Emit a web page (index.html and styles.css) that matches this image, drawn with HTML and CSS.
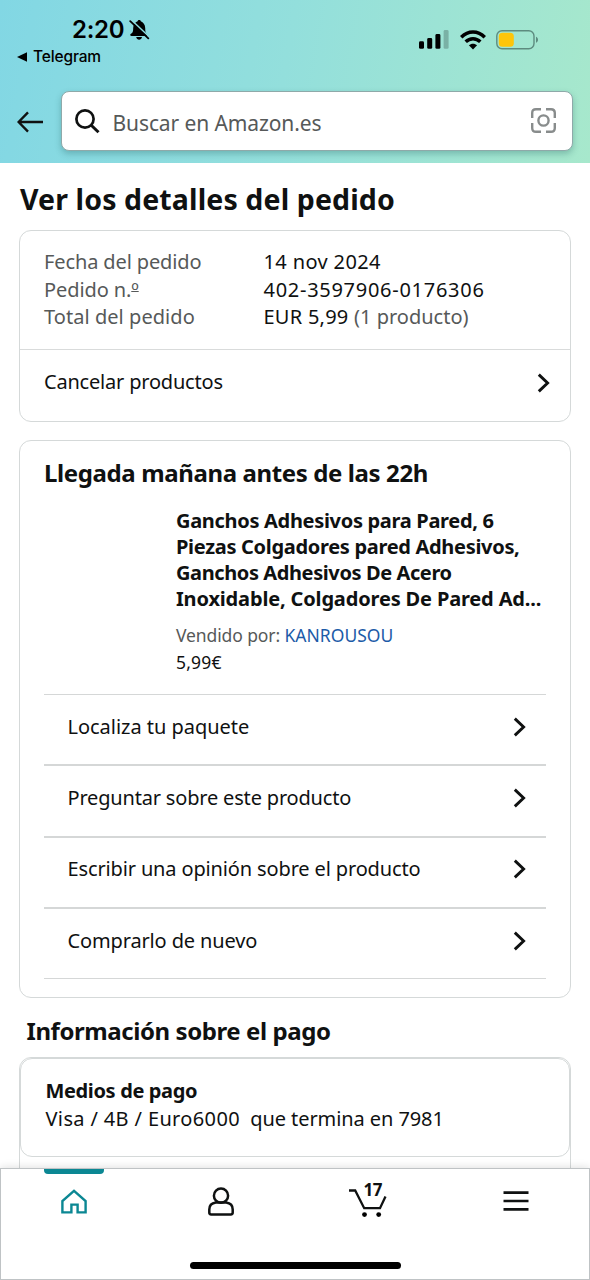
FILE: index.html
```html
<!DOCTYPE html>
<html lang="es">
<head>
<meta charset="utf-8">
<meta name="viewport" content="width=device-width, initial-scale=1">
<title>Ver los detalles del pedido</title>
<link rel="stylesheet" href="styles.css">
</head>
<body>
<svg width="0" height="0" class="defs"><symbol id="chev" viewBox="0 0 14 20"><path d="M1.8 1.6 L10.6 10 L1.8 18.4" fill="none" stroke="#0f1111" stroke-width="2.9"/></symbol></svg>
<header class="header">
  <div class="status">
    <div class="status-left">
      <div class="clock"><span>2:20</span>
        <svg width="21" height="22" viewBox="0 0 21 22"><path d="M2.6 17 H17.4 C18.4 17 18.5 15.9 17.7 15.1 C16.4 13.8 16.3 12.4 16.2 9 C16.1 5.5 14.2 3.2 11.8 2.3 C11.6 .5 8.8 .5 8.6 2.3 C6 3.2 4.3 5.5 4.2 9 C4.1 12.4 4 13.8 1.6 15.1 C.8 16 1.2 17 2.6 17 Z M7.2 18 H13 C12.4 21.6 7.8 21.6 7.2 18 Z" fill="#000"/><path d="M2.4 1 L20.4 18" stroke="#8bdbdf" stroke-width="1.7"/><path d="M1.2 2.2 L19.3 19.4" stroke="#000" stroke-width="1.8" stroke-linecap="round"/></svg>
      </div>
      <div class="back-app"><svg width="10" height="10" viewBox="0 0 10 10"><path d="M0 5 L10 .3 V9.7 Z"/></svg><span>Telegram</span></div>
    </div>
    <div class="status-right">
      <svg width="30" height="19" viewBox="0 0 30 19"><rect x="0" y="11.2" width="5" height="7.6" rx="1.4"/><rect x="8.2" y="8" width="5" height="10.8" rx="1.4"/><rect x="16.4" y="4" width="5" height="14.8" rx="1.4"/><rect x="24.6" y="0" width="5" height="18.8" rx="1.4" opacity=".22"/></svg>
      <svg class="wifi" width="26" height="20" viewBox="0 0 26 20"><g fill="none" stroke="#000" stroke-width="3.5"><path d="M1.2 7.2 C8 .2 18 .2 24.8 7.2"/><path d="M5.7 11.8 C10 7.6 16 7.6 20.3 11.8"/></g><path d="M13 19.5 L8.9 15.3 C11.2 13.2 14.8 13.2 17.1 15.3 Z"/></svg>
      <svg class="battery" width="43" height="20" viewBox="0 0 43 20"><rect x=".8" y=".8" width="37.2" height="18" rx="5.2" fill="none" stroke="#5d8b7f" stroke-width="1.4"/><rect x="2.8" y="2.8" width="15" height="14" rx="3.6" fill="#fdc50a"/><path d="M40 6.8 C42.7 8 42.7 11.6 40 12.8 Z" fill="#5d8b7f"/></svg>
    </div>
  </div>
  <div class="search-row">
    <svg class="back" width="27" height="22" viewBox="0 0 27 22"><path d="M11 1.4 L1.6 11 L11 20.6 M1.6 11 H26" fill="none" stroke="#0f1111" stroke-width="2.4"/></svg>
    <div class="search">
      <svg width="25" height="25" viewBox="0 0 25 25"><circle cx="10" cy="10" r="8.6" fill="none" stroke="#0f1111" stroke-width="2.7"/><path d="M16 16 L23.5 23.3" stroke="#0f1111" stroke-width="3"/></svg>
      <span class="placeholder">Buscar en Amazon.es</span>
      <svg class="lens" width="25" height="25" viewBox="0 0 25 25"><g fill="none" stroke="#888c8c" stroke-width="2.4"><circle cx="12.5" cy="12.5" r="5.1"/><path d="M1.2 10 V5 Q1.2 1.2 5 1.2 H10 M15 1.2 H20 Q23.8 1.2 23.8 5 V10 M23.8 15 V20 Q23.8 23.8 20 23.8 H15 M10 23.8 H5 Q1.2 23.8 1.2 20 V15"/></g></svg>
    </div>
  </div>
</header>
<main class="content">
  <h1 class="title">Ver los detalles del pedido</h1>
  <section class="card">
    <dl class="facts">
      <dt class="f1">Fecha del pedido</dt><dd class="v1">14 nov 2024</dd>
      <dt class="f2">Pedido n.<span class="ordinal">º</span></dt><dd class="v2">402-3597906-0176306</dd>
      <dt class="f3">Total del pedido</dt><dd class="v3">EUR 5,99 <span class="muted">(1 producto)</span></dd>
    </dl>
    <div class="cancel"><span>Cancelar productos</span><svg width="14" height="20"><use href="#chev"/></svg></div>
  </section>
  <section class="card shipment">
    <h2 class="heading arrival">Llegada mañana antes de las 22h</h2>
    <div class="product">
      <p class="name">Ganchos Adhesivos para Pared, 6<br>Piezas Colgadores pared Adhesivos,<br><span class="third-line">Ganchos Adhesivos De Acero</span><br><span class="last-line">Inoxidable, Colgadores De Pared Ad...</span></p>
      <p class="seller">Vendido por: <a class="link">KANROUSOU</a></p>
      <p class="price">5,99€</p>
    </div>
    <div class="actions">
      <div class="action"><span class="a1">Localiza tu paquete</span><svg width="14" height="20"><use href="#chev"/></svg></div>
      <div class="action"><span class="a2">Preguntar sobre este producto</span><svg width="14" height="20"><use href="#chev"/></svg></div>
      <div class="action"><span class="a3">Escribir una opinión sobre el producto</span><svg width="14" height="20"><use href="#chev"/></svg></div>
      <div class="action"><span class="a4">Comprarlo de nuevo</span><svg width="14" height="20"><use href="#chev"/></svg></div>
    </div>
  </section>
  <h2 class="heading payment-title">Información sobre el pago</h2>
  <section class="payment">
    <div class="method"><h3 class="method-title">Medios de pago</h3><p class="method-text"><span class="network">Visa / 4B / Euro6000</span> &nbsp;que termina en 7981</p></div>
  </section>
</main>
<nav class="nav">
  <div class="tabs">
    <div class="tab active"><svg width="26" height="25" viewBox="0 0 26 25"><path d="M1.4 23.4 V12 L13 1.8 L24.6 12 V23.4 H16.6 V15.6 H10.4 V23.4 Z" fill="none" stroke="#0b8793" stroke-width="2.4"/></svg></div>
    <div class="tab"><svg width="26" height="29" viewBox="0 0 26 29"><g fill="none" stroke="#0f1111" stroke-width="2.5"><circle cx="13" cy="8.7" r="7.1"/><path d="M7.8 15.6 H18.2 Q24.7 16.6 24.7 22.5 V25.5 Q24.7 27.4 22.8 27.4 H3.2 Q1.3 27.4 1.3 25.5 V22.5 Q1.3 16.6 7.8 15.6 Z"/></g></svg></div>
    <div class="tab cart"><svg width="38" height="34" viewBox="0 0 38 34"><path d="M0 6.5 H6.2 L15.2 24.2 H31 L36.5 12.5" fill="none" stroke="#0f1111" stroke-width="2.3"/><circle cx="15.5" cy="30.6" r="2.4"/><circle cx="29.7" cy="30.6" r="2.4"/></svg><span class="count">17</span></div>
    <div class="tab"><svg width="26" height="20" viewBox="0 0 26 20"><path d="M.5 1.6 H25.5 M.5 10 H25.5 M.5 18.4 H25.5" stroke="#0f1111" stroke-width="2.6"/></svg></div>
  </div>
  <div class="home-bar"></div>
</nav>
</body>
</html>
```
FILE: styles.css
```css
* { box-sizing: border-box; margin: 0; padding: 0; }
body { width: 590px; height: 1280px; overflow: hidden; display: flex; flex-direction: column; background: #fff; color: #0f1111; font: 20px/27.5px "Noto Sans", sans-serif; white-space: nowrap; }
svg { display: block; flex: none; }
.defs { position: absolute; }
.header { flex: none; height: 163px; background: linear-gradient(100deg, #82d7e4 0%, #93dfdc 48%, #a7e8cc 100%); padding-top: 14px; }
.status { height: 77px; display: flex; justify-content: space-between; padding: 0 51px 0 17px; font-family: Inter, sans-serif; color: #000; }
.clock { display: flex; align-items: center; gap: 5px; padding-left: 55px; height: 32px; font-size: 24px; font-weight: 600; letter-spacing: -.3px; }
.back-app { display: flex; align-items: center; gap: 6px; height: 20px; font-size: 15.5px; line-height: 20px; font-weight: 500; letter-spacing: -.15px; margin-top: 1px; }
.status-right { display: flex; align-items: flex-start; padding-top: 16px; }
.wifi { margin: 0 0 0 11px; }
.battery { margin-left: 10px; }
.search-row { display: flex; align-items: center; padding: 0 17px; gap: 17px; height: 60px; }
.back { margin-top: 2px; }
.search { flex: 1; height: 60px; display: flex; align-items: center; background: #fff; border: 1.5px solid #8fa9a9; border-radius: 8px; padding: 0 16px 0 13px; box-shadow: 0 3px 6px rgba(30, 90, 90, .3); }
.placeholder { flex: 1; margin-left: 12.5px; padding-top: 6px; font-size: 21px; letter-spacing: -.1px; color: #565959; }
.lens { margin-top: -2px; }
.content { flex: 1; min-height: 0; overflow: hidden; padding: 18px 19px 0 19px; }
.title { font-size: 28.5px; line-height: 36px; letter-spacing: .12px; padding-left: 1px; }
.card { border: 1.5px solid #d5d9d9; border-radius: 12px; margin: 13px 0 0; width: 552px; height: 192px; }
.facts { display: grid; grid-template-columns: 219.5px 1fr; align-content: start; height: 119px; padding: 17px 24px 0; border-bottom: 1px solid #d9dbdb; }
.facts dt, .muted { color: #565959; }
.f1 { letter-spacing: -.12px; }
.f2 { letter-spacing: -.1px; }
.f3 { letter-spacing: .05px; }
.ordinal { text-decoration: underline; text-decoration-thickness: 1px; text-underline-offset: -6px; }
.v1 { letter-spacing: .37px; }
.v2 { letter-spacing: .72px; }
.v3 { letter-spacing: .25px; }
.muted { letter-spacing: 0; }
.cancel { display: flex; justify-content: space-between; padding: 18px 19.5px 0 24px; letter-spacing: -.2px; }
.cancel svg { margin-top: 5px; }
.shipment { margin-top: 18px; height: 558px; padding: 16px 24px 0 24px; }
.heading { font-size: 24px; line-height: 32px; letter-spacing: -.38px; }
.product { padding: 19px 0 0 132px; height: 205px; }
.name { font-weight: 700; line-height: 26px; height: 104px; letter-spacing: -.31px; }
.third-line { letter-spacing: -.4px; }
.last-line { letter-spacing: -.16px; }
.seller { margin-top: 9.5px; font-size: 17.5px; color: #565959; letter-spacing: -.1px; }
.price { font-size: 17.5px; letter-spacing: .2px; }
.link { color: #1c5ba8; letter-spacing: 0; }
.actions { border-top: 1px solid #d5d7d7; }
.action { height: 71.4px; display: flex; justify-content: space-between; padding: 17.5px 19px 0 23.5px; border-bottom: 2px solid #d5d7d7; }
.action:last-child { border-bottom-width: 1px; height: 70px; }
.action svg { margin-top: 4px; }
.a1 { letter-spacing: -.03px; }
.a2 { letter-spacing: -.18px; }
.a3 { letter-spacing: -.14px; }
.a4 { letter-spacing: -.14px; }
.payment-title { margin: 17px 0 10px 7.5px; letter-spacing: -.42px; }
.payment { width: 552px; height: 160px; border: 1.5px solid #d5d9d9; border-radius: 12px; }
.method { height: 99px; border: 1.5px solid #d5d9d9; border-radius: 12px; padding: 18px 24.5px; }
.method-title { font-size: 20px; letter-spacing: -.36px; }
.method-text { letter-spacing: -.08px; }
.network { letter-spacing: .36px; }
.nav { flex: none; height: 112px; border: 1.5px solid #bfc3c5; background: #fff; box-shadow: 0 -1px 8px rgba(0, 0, 0, .12); position: relative; z-index: 1; }
.tabs { display: grid; grid-template-columns: 146px repeat(3, 147.5px); height: 65px; }
.tab { display: grid; place-items: center; position: relative; }
.active::before { content: ""; position: absolute; top: 0; left: 43px; width: 60px; height: 5px; border-radius: 0 0 4px 4px; background: #0b8793; }
.tab svg { margin-top: -1px; }
.count { position: absolute; top: 8px; left: 69px; font-size: 17px; font-weight: 700; line-height: 26px; letter-spacing: -.5px; }
.home-bar { width: 211px; height: 7px; border-radius: 4px; background: #000; margin: 28px 0 0 188.5px; }
```
